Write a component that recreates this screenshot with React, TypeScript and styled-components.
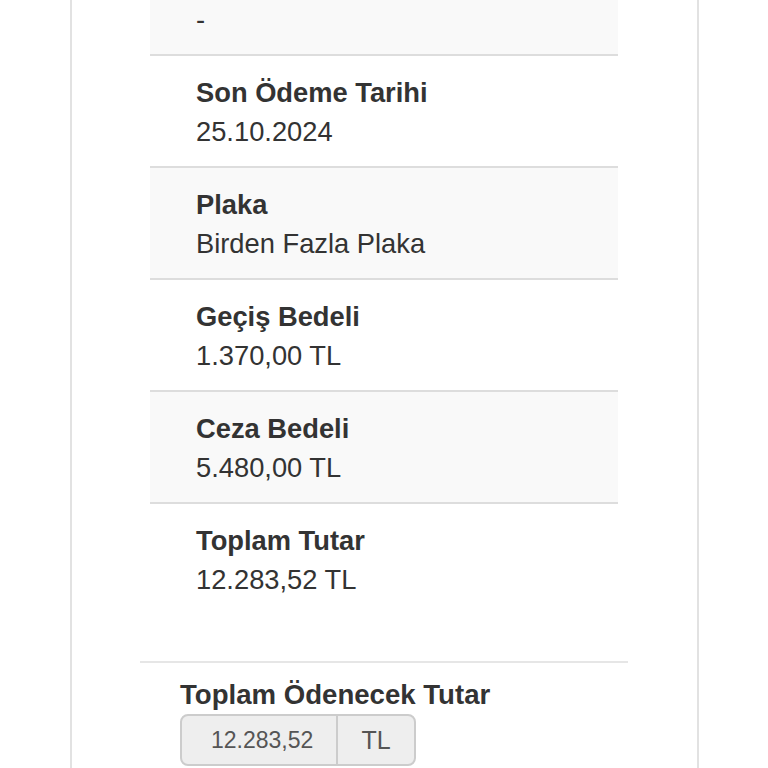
import React from "react"
import styled, { createGlobalStyle } from "styled-components"

const GlobalStyle = createGlobalStyle`
  html, body {
    margin: 0;
    padding: 0;
    background: #ffffff;
  }
  body {
    font-family: "Liberation Sans", Arial, Helvetica, sans-serif;
    color: #333333;
    overflow: hidden;
  }
`

const Page = styled.div`
  height: 768px;
  overflow: hidden;
`

const Card = styled.div`
  margin-left: 70px;
  width: 629px;
  box-sizing: border-box;
  border-left: 2px solid #e2e2e2;
  border-right: 2px solid #e2e2e2;
  min-height: 900px;
  /* page is scrolled: first row sits partly above the viewport */
  margin-top: -56px;
`

const Table = styled.div`
  margin-left: 78px;
  width: 468px;
  display: flex;
  flex-direction: column;
`

const Row = styled.div<{ striped?: boolean; last?: boolean }>`
  background: ${(p) => (p.striped ? "#f9f9f9" : "#ffffff")};
  padding: 17px 46px 15px 46px;
  height: 78px;
  border-bottom: ${(p) => (p.last ? "none" : "2px solid #dddddd")};
  display: flex;
  flex-direction: column;
`

const Label = styled.div`
  font-size: 27.3px;
  line-height: 39px;
  min-height: 39px;
  font-weight: 700;
  color: #333333;
`

const Value = styled.div`
  font-size: 27.3px;
  line-height: 39px;
  color: #333333;
`

const Divider = styled.hr`
  margin: 47px 0 0 68px;
  width: 488px;
  border: none;
  border-top: 2px solid #e6e6e6;
  height: 0;
`

const Footer = styled.div`
  margin: 12px 0 0 108px;
  display: flex;
  flex-direction: column;
  gap: 0;
`

const FooterLabel = styled.div`
  font-size: 27.6px;
  line-height: 39px;
  font-weight: 700;
  color: #333333;
`

const InputGroup = styled.div`
  display: flex;
  width: 236px;
  height: 52px;
  box-sizing: border-box;
  border: 2px solid #cccccc;
  border-radius: 8px;
  overflow: hidden;
  background: #eeeeee;
`

const AmountInput = styled.div`
  width: 156px;
  box-sizing: border-box;
  padding-left: 29px;
  display: flex;
  align-items: center;
  font-size: 23px;
  color: #555555;
  border-right: 2px solid #cccccc;
`

const Addon = styled.div`
  flex: 1;
  display: flex;
  align-items: center;
  justify-content: center;
  font-size: 25px;
  color: #555555;
`

const rows = [
  { label: "", value: "-" },
  { label: "Son Ödeme Tarihi", value: "25.10.2024" },
  { label: "Plaka", value: "Birden Fazla Plaka" },
  { label: "Geçiş Bedeli", value: "1.370,00 TL" },
  { label: "Ceza Bedeli", value: "5.480,00 TL" },
  { label: "Toplam Tutar", value: "12.283,52 TL" },
]

export default function App() {
  return (
    <Page>
      <GlobalStyle />
      <Card>
        <Table>
          {rows.map((r, i) => (
            <Row key={i} striped={i % 2 === 0} last={i === rows.length - 1}>
              <Label>{r.label}</Label>
              <Value>{r.value}</Value>
            </Row>
          ))}
        </Table>
        <Divider />
        <Footer>
          <FooterLabel>Toplam Ödenecek Tutar</FooterLabel>
          <InputGroup>
            <AmountInput>12.283,52</AmountInput>
            <Addon>TL</Addon>
          </InputGroup>
        </Footer>
      </Card>
    </Page>
  )
}
